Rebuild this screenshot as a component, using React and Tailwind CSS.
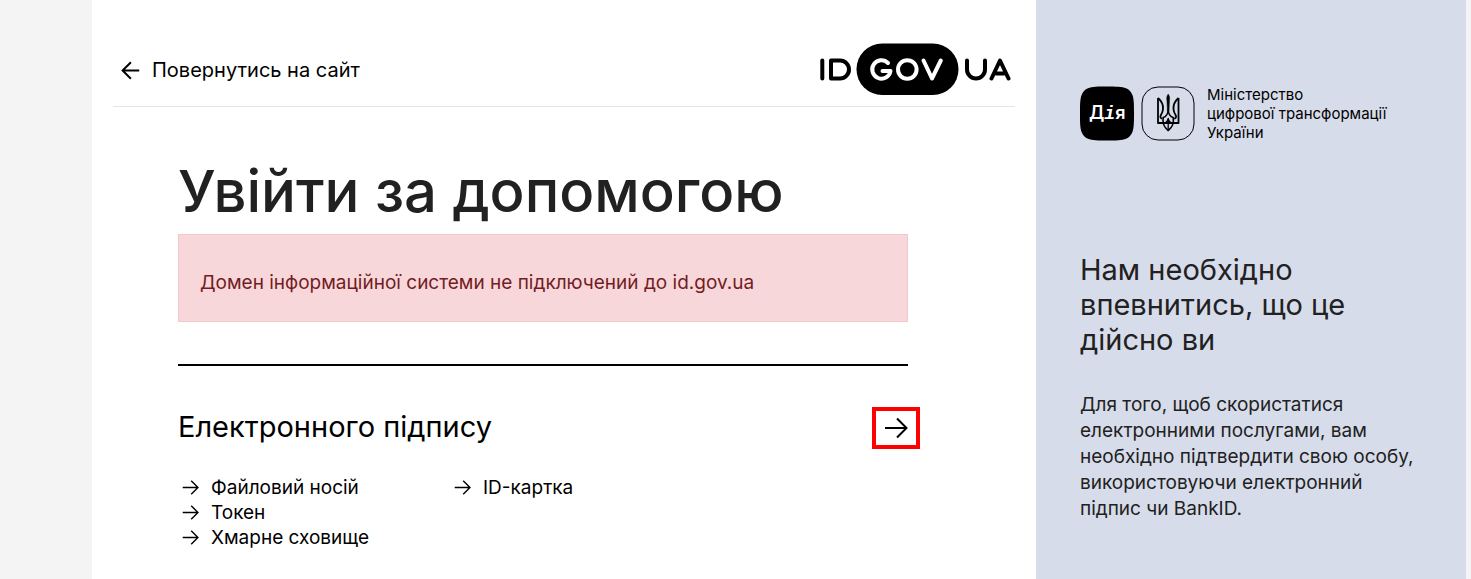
import React from "react";

function Arrow({ left = false, className, weight = 2 }) {
  return (
    <svg viewBox="0 0 24 24" className={className} fill="none" stroke="currentColor" strokeWidth={weight} aria-hidden="true">
      {left ? <path d="M23 12H2M12.500 1.500L2 12l10.500 10.500" /> : <path d="M1 12h21M13 2.500L22.500 12 13 21.500" />}
    </svg>
  );
}

function GovLogo() {
  return (
    <svg viewBox="0 0 192 52" className="h-[52px] w-48 shrink-0" role="img" aria-label="ID GOV UA" fill="none" strokeWidth="4" strokeLinecap="round" strokeLinejoin="round">
      <rect x="37.500" y="0.500" width="102" height="51.500" rx="25.700" fill="#000" />
      <g stroke="#000">
        <path d="M3.300 17.500v18" />
        <path d="M12 17.500v18h9a9 9 0 0 0 0-18z" />
        <path d="M148 17.500V26.500a9 9 0 0 0 18 0V17.500" />
        <path d="M172.500 35.500l8.500-18 8.500 18M177 30.500h8" />
      </g>
      <g stroke="#fff">
        <path d="M69 20a9.200 9.200 0 1 0 2.500 8H63.500" />
        <circle cx="88.300" cy="26.500" r="9.300" />
        <path d="M104.500 17.500l8.500 18 8.800-18" />
      </g>
    </svg>
  );
}

function Trident() {
  return (
    <svg viewBox="0 0 54 55" className="h-[55px] w-[54px]" role="img" aria-label="Герб України" fill="none" stroke="#000" strokeLinejoin="round">
      <rect x="1" y="1" width="52" height="53" rx="16" strokeWidth="1" />
      <g strokeWidth="1.800">
        <path d="M17 12v25h20.500V12" />
        <path d="M17 12c4 3.500 5.300 7 5 11-.1 3-1 4.500-2.300 6.500-.8 1.500 0 3 1.600 3M37.500 12c-4 3.500-5.300 7-5 11 .1 3 1 4.500 2.300 6.500.8 1.500 0 3-1.600 3" />
        <path d="M27.200 24c-.3 4-1.500 6.500-5 7.500-1 6 1.800 10.500 5 13 3.200-2.500 6-7 5-13-3.500-1-4.700-3.500-5-7.500z" strokeWidth="1.600" />
        <path d="M27.200 32v12M22.500 37.500c2-.5 4-2 4.700-5 .7 3 2.700 4.500 4.700 5" strokeWidth="1.300" />
      </g>
      <path d="M27.200 8c1.600 2.500 1.700 4 1.200 7l-.4 10h-1.600L26 15c-.5-3-.4-4.500 1.200-7z" fill="#000" strokeWidth=".5" />
    </svg>
  );
}

function DiiaMark() {
  return (
    <svg viewBox="0 0 54 55" className="h-[55px] w-[54px]" role="img" aria-label="Дія">
      <path d="M27 .5c9 0 15 .2 19 1.800 3 1.200 5 3.200 6.200 6.200C54 12.500 54 18.500 54 27.500s0 15-1.800 19c-1.200 3-3.200 5-6.200 6.200-4 1.800-10 1.800-19 1.800s-15 0-19-1.800c-3-1.200-5-3.200-6.200-6.200C0 42.500 0 36.500 0 27.500s0-15 1.800-19C3 5.500 5 3.500 8 2.300 12 .5 18 .5 27 .5z" />
      <text x="9" y="33" fill="#fff" fontFamily="Inter, sans-serif" fontSize="18" fontWeight="600">
        Д<tspan fontFamily="Liberation Mono, monospace" fontStyle="italic" fontWeight="700">і</tspan>я
      </text>
    </svg>
  );
}

function Option({ children }) {
  return (
    <li>
      <a href="#" className="flex items-center gap-3">
        <Arrow className="size-[17px] shrink-0" />
        {children}
      </a>
    </li>
  );
}

export default function App() {
  return (
    <div className="flex min-h-screen bg-[#f4f4f4] pl-[92px] pr-[5px] font-['Inter',sans-serif] text-black">
      <main className="min-w-0 flex-1 bg-white px-[21px] pt-[43px]">
        <header className="flex items-start justify-between border-b border-[#e5e5e5] pb-[11px] pl-2 pr-1">
          <a href="#" className="mt-[15px] flex items-center gap-3 text-[20px] leading-6">
            <Arrow left weight={2.5} className="size-[19px]" />
            Повернутись на сайт
          </a>
          <GovLogo />
        </header>
        <div className="pl-[65px] pr-[107px]">
          <h1 className="mt-12 text-[58px] font-medium leading-[72px] text-[#212121]">Увійти за допомогою</h1>
          <div role="alert" className="mt-[7px] border border-[#f5c6cb] bg-[#f8d7da] px-[21px] pb-[26px] pt-9 text-[19px] leading-6 text-[#721c24]">
            Домен інформаційної системи не підключений до id.gov.ua
          </div>
          <section className="mt-[42px] border-t-2 border-black pt-[41px]">
            <div className="-mr-3 flex items-start justify-between">
              <h2 className="text-[29px] leading-10">Електронного підпису</h2>
              <button aria-label="Електронного підпису" className="flex h-[42px] w-12 items-center justify-center border-4 border-[#f00]">
                <Arrow className="size-6" />
              </button>
            </div>
            <div className="mt-[26px] grid grid-cols-[272px_1fr] pl-1 text-[19px] leading-[25px]">
              <ul>
                <Option>Файловий носій</Option>
                <Option>Токен</Option>
                <Option>Хмарне сховище</Option>
              </ul>
              <ul>
                <Option>ID-картка</Option>
              </ul>
            </div>
          </section>
        </div>
      </main>
      <aside className="w-[430px] shrink-0 bg-[#d7dcea] pl-11 pt-[85px] text-[#212121]">
        <div className="flex items-center text-black">
          <DiiaMark />
          <div className="ml-[7px]"><Trident /></div>
          <p className="ml-3 text-[15px] leading-[19px]">Міністерство<br />цифрової трансформації<br />України</p>
        </div>
        <h2 className="mt-[110px] text-[29px] leading-[35px]">Нам необхідно<br />впевнитись, що це<br />дійсно ви</h2>
        <p className="mt-[35px] text-[19px] leading-[26px]">Для того, щоб скористатися<br />електронними послугами, вам<br />необхідно підтвердити свою особу,<br />використовуючи електронний<br />підпис чи BankID.</p>
      </aside>
    </div>
  );
}
